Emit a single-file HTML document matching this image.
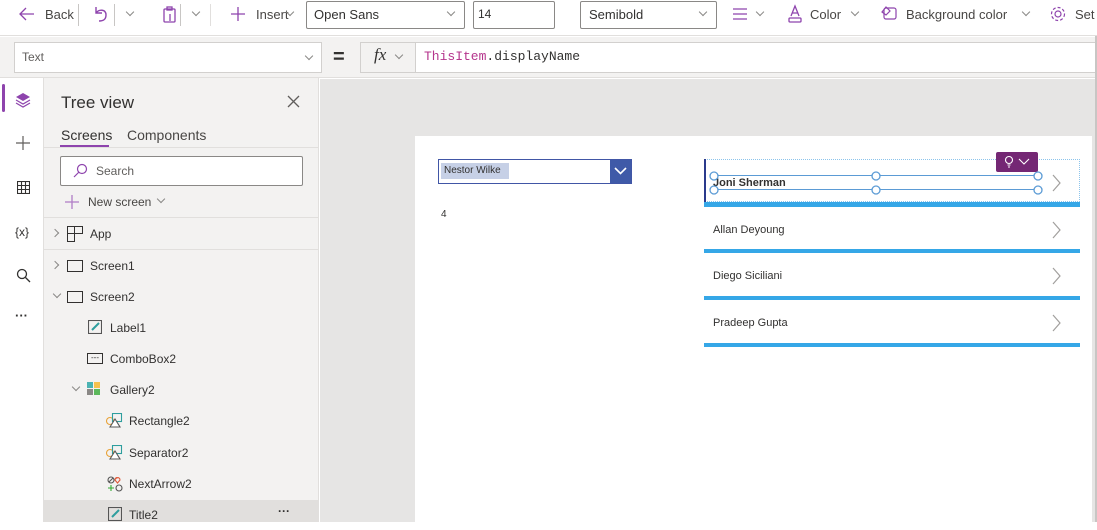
<!DOCTYPE html><html><head><style>
*{box-sizing:border-box;margin:0;padding:0}
body{width:1097px;height:522px;overflow:hidden;font-family:"Liberation Sans",sans-serif;background:#fff;position:relative;color:#323130}
.a{position:absolute}
.t{font-size:13px;color:#484644;white-space:nowrap}
.box{border:1px solid #8a8886;background:#fff;border-radius:2px}
.cv{position:absolute;width:6px;height:6px;border-right:1px solid #8a8886;border-bottom:1px solid #8a8886;transform:rotate(45deg)}
.cr{position:absolute;width:6px;height:6px;border-right:1px solid #8a8886;border-bottom:1px solid #8a8886;transform:rotate(-45deg)}
.tree .row{position:absolute;left:44px;width:275px;height:31px;font-size:12px;color:#323130}
.tree .row>span{position:absolute;top:9px}
</style></head><body>
<!-- toolbar -->
<div class="a" style="left:0;top:0;width:1097px;height:36px;background:#fff;border-bottom:1px solid #e1dfdd"></div>
<svg class="a" style="left:18px;top:6px" width="18" height="16" fill="none" stroke="#8e44ad" stroke-width="1.3"><path d="M16 8H2M8 2L2 8l6 6"/></svg>
<div class="a t" style="left:45px;top:7px">Back</div>
<div class="a" style="left:78px;top:4px;width:1px;height:22px;background:#c8c6c4"></div>
<svg class="a" style="left:93px;top:5px" width="16" height="18" fill="none" stroke="#8e44ad" stroke-width="1.4"><path d="M3 2v6h6M3 8c3-4 10-4 10 2s-5 6-7 6"/></svg>
<div class="a" style="left:114px;top:4px;width:1px;height:22px;background:#c8c6c4"></div>
<div class="cv" style="left:127px;top:9px"></div>
<svg class="a" style="left:162px;top:5px" width="16" height="18" fill="none" stroke="#8e44ad" stroke-width="1.3"><rect x="2" y="4" width="11" height="13" rx="1"/><rect x="5" y="2" width="5" height="3"/><path d="M8 9v7"/></svg>
<div class="a" style="left:180px;top:4px;width:1px;height:22px;background:#c8c6c4"></div>
<div class="cv" style="left:193px;top:9px"></div>
<div class="a" style="left:210px;top:4px;width:1px;height:22px;background:#e1dfdd"></div>
<svg class="a" style="left:230px;top:6px" width="16" height="16" stroke="#8e44ad" stroke-width="1.3"><path d="M8 1v14M1 8h14"/></svg>
<div class="a t" style="left:256px;top:7px">Insert</div>
<div class="cv" style="left:287px;top:9px"></div>
<div class="a box" style="left:306px;top:1px;width:159px;height:28px"></div>
<div class="a t" style="left:314px;top:7px;color:#323130">Open Sans</div>
<div class="cv" style="left:448px;top:9px"></div>
<div class="a box" style="left:473px;top:1px;width:82px;height:28px"></div>
<div class="a t" style="left:478px;top:7px;font-size:12px;color:#323130">14</div>
<div class="a box" style="left:580px;top:1px;width:137px;height:28px"></div>
<div class="a t" style="left:589px;top:7px;color:#323130">Semibold</div>
<div class="cv" style="left:700px;top:9px"></div>
<svg class="a" style="left:732px;top:7px" width="16" height="14" stroke="#8e44ad" stroke-width="1.3"><path d="M1 2h14M1 7h14M1 12h14"/></svg>
<div class="cv" style="left:757px;top:9px"></div>
<svg class="a" style="left:787px;top:4px" width="16" height="20" fill="none" stroke="#8e44ad" stroke-width="1.3"><path d="M4 12L8 2l4 10M5.5 9h5"/><rect x="2" y="14" width="12" height="4" rx="1"/></svg>
<div class="a t" style="left:810px;top:7px">Color</div>
<div class="cv" style="left:852px;top:9px"></div>
<svg class="a" style="left:880px;top:5px" width="18" height="16" fill="none" stroke="#8e44ad" stroke-width="1.2"><rect x="4" y="3" width="12" height="11" rx="2"/><path d="M2 7l4-5 4 4-4 4z"/></svg>
<div class="a t" style="left:906px;top:7px">Background color</div>
<div class="cv" style="left:1023px;top:9px"></div>
<svg class="a" style="left:1049px;top:5px" width="18" height="18" fill="none" stroke="#8e44ad" stroke-width="1.2"><circle cx="9" cy="9" r="3"/><circle cx="9" cy="9" r="6.5" stroke-dasharray="3 2"/></svg>
<div class="a t" style="left:1075px;top:7px">Set</div>
<!-- formula bar -->
<div class="a" style="left:0;top:37px;width:1097px;height:41px;background:#f3f2f1;border-bottom:1px solid #e1dfdd"></div>
<div class="a" style="left:14px;top:42px;width:308px;height:31px;background:#fff;border:1px solid #d2d0ce"></div>
<div class="a t" style="left:22px;top:50px;font-size:12px;color:#605e5c">Text</div>
<div class="cv" style="left:306px;top:53px"></div>
<div class="a t" style="left:333px;top:46px;font-size:20px;font-weight:bold;color:#323130">=</div>
<div class="a" style="left:360px;top:42px;width:737px;height:31px;background:#fff;border:1px solid #d2d0ce"></div>
<div class="a" style="left:361px;top:43px;width:55px;height:29px;background:#f3f2f1;border-right:1px solid #d2d0ce"></div>
<div class="a t" style="left:374px;top:45px;font-family:'Liberation Serif',serif;font-style:italic;font-size:17px;color:#323130">fx</div>
<div class="cv" style="left:396px;top:52px"></div>
<div class="a t" style="left:424px;top:49px;font-family:'Liberation Mono',monospace;font-size:13px;color:#323130"><span style="color:#b5358c">ThisItem</span>.displayName</div>
<!-- left rail -->
<div class="a" style="left:0;top:78px;width:44px;height:444px;background:#fff;border-right:1px solid #e1dfdd"></div>
<div class="a" style="left:2px;top:84px;width:3px;height:28px;background:#8e44ad;border-radius:2px"></div>
<svg class="a" style="left:15px;top:92px" width="16" height="16" fill="#8e44ad"><path d="M8 1l7 4-7 4-7-4z"/><path d="M1 8l7 4 7-4" fill="none" stroke="#8e44ad" stroke-width="1.2"/><path d="M1 11l7 4 7-4" fill="none" stroke="#8e44ad" stroke-width="1.2"/></svg>
<svg class="a" style="left:16px;top:136px" width="14" height="14" stroke="#605e5c" stroke-width="1.2"><path d="M7 0v14M0 7h14"/></svg>
<svg class="a" style="left:17px;top:181px" width="13" height="13" fill="none" stroke="#323130" stroke-width="1.1"><rect x="0.5" y="0.5" width="12" height="12"/><path d="M0 4.5h13M0 8.5h13M4.5 0v13M8.5 0v13"/></svg>
<div class="a t" style="left:15px;top:225px;font-size:12px;color:#323130">{x}</div>
<svg class="a" style="left:16px;top:268px" width="15" height="15" fill="none" stroke="#323130" stroke-width="1.3"><circle cx="6" cy="6" r="4.5"/><path d="M9.5 9.5L14 14"/></svg>
<div class="a t" style="left:15px;top:308px;font-size:13px;font-weight:bold;color:#323130">···</div>
<!-- tree panel -->
<div class="a" style="left:44px;top:78px;width:275px;height:444px;background:#f3f2f1;border-right:1px solid #e1dfdd"></div>
<div class="a t" style="left:61px;top:93px;font-size:17px;color:#323130">Tree view</div>
<svg class="a" style="left:287px;top:95px" width="13" height="13" stroke="#605e5c" stroke-width="1.3"><path d="M1 1l11 11M12 1L1 12"/></svg>
<div class="a t" style="left:61px;top:127px;font-size:14px;color:#323130">Screens</div>
<div class="a" style="left:60px;top:145px;width:49px;height:2px;background:#8e44ad"></div>
<div class="a t" style="left:127px;top:127px;font-size:14px">Components</div>
<div class="a" style="left:44px;top:147px;width:275px;height:1px;background:#e1dfdd"></div>
<div class="a" style="left:60px;top:156px;width:243px;height:30px;background:#fff;border:1px solid #8a8886;border-radius:2px"></div>
<svg class="a" style="left:72px;top:163px" width="16" height="16" fill="none" stroke="#8e44ad" stroke-width="1.2"><circle cx="10" cy="6" r="4.5"/><path d="M7 9l-5 5"/></svg>
<div class="a t" style="left:96px;top:164px;font-size:12px;color:#605e5c">Search</div>
<svg class="a" style="left:64px;top:194px" width="16" height="16" stroke="#b07cc6" stroke-width="1.3"><path d="M8 1v14M1 8h14"/></svg>
<div class="a t" style="left:88px;top:195px;font-size:12px">New screen</div>
<div class="cv" style="left:158px;top:196px"></div>
<div class="a" style="left:44px;top:217px;width:275px;height:1px;background:#e1dfdd"></div>
<div class="a" style="left:44px;top:249px;width:275px;height:1px;background:#e1dfdd"></div>
<div class="a" style="left:44px;top:500px;width:275px;height:22px;background:#e1dfdd"></div>
<div class="tree">
<div class="row" style="top:218px"><div class="cr" style="left:8px;top:12px"></div><svg style="position:absolute;left:23px;top:8px" width="16" height="16" fill="none" stroke="#323130"><path d="M0.5 0.5h15v7h-15zM0.5 7.5v8h7v-15"/></svg><span style="left:46px">App</span></div>
<div class="row" style="top:250px"><div class="cr" style="left:8px;top:12px"></div><span style="left:23px;top:10px;width:16px;height:12px;border:1px solid #323130"></span><span style="left:46px">Screen1</span></div>
<div class="row" style="top:281px"><div class="cv" style="left:10px;top:10px"></div><span style="left:23px;top:10px;width:16px;height:12px;border:1px solid #323130"></span><span style="left:46px">Screen2</span></div>
<div class="row" style="top:312px"><svg style="position:absolute;left:44px;top:8px" width="14" height="14" fill="none" stroke="#555" stroke-width="1.1"><rect x="0.5" y="0.5" width="13" height="13"/><path d="M4 10l7-7" stroke="#2e9e9e" stroke-width="2"/></svg><span style="left:66px">Label1</span></div>
<div class="row" style="top:343px"><span style="left:43px;top:10px;width:16px;height:11px;border:1px solid #323130;font-size:8px;line-height:7px;text-align:center">---</span><span style="left:66px">ComboBox2</span></div>
<div class="row" style="top:374px"><div class="cv" style="left:29px;top:10px"></div><span style="left:43px;top:8px;width:6px;height:6px;background:#4bb3b3"></span><span style="left:50px;top:8px;width:6px;height:6px;background:#f6c14f"></span><span style="left:43px;top:15px;width:6px;height:6px;background:#8a8886"></span><span style="left:50px;top:15px;width:6px;height:6px;background:#5cb85c"></span><span style="left:66px">Gallery2</span></div>
<div class="row" style="top:405px"><svg style="position:absolute;left:62px;top:8px" width="17" height="15" fill="none" stroke-width="1.1"><circle cx="4" cy="8" r="3.5" stroke="#e8a33a"/><rect x="6.5" y="0.5" width="9" height="8" stroke="#2e9e9e"/><path d="M4 14l5-8 5 8z" stroke="#555" fill="#fff"/></svg><span style="left:85px">Rectangle2</span></div>
<div class="row" style="top:437px"><svg style="position:absolute;left:62px;top:8px" width="17" height="15" fill="none" stroke-width="1.1"><circle cx="4" cy="8" r="3.5" stroke="#e8a33a"/><rect x="6.5" y="0.5" width="9" height="8" stroke="#2e9e9e"/><path d="M4 14l5-8 5 8z" stroke="#555" fill="#fff"/></svg><span style="left:85px">Separator2</span></div>
<div class="row" style="top:468px"><svg style="position:absolute;left:63px;top:8px" width="16" height="16" fill="none" stroke-width="1.1"><circle cx="4" cy="4" r="3" stroke="#555"/><path d="M2 6l4-4" stroke="#555"/><path d="M10 2c1-1 3 0 3 2l-2.5 3L8 4c0-2 2-3 2-2z" stroke="#e05a3a"/><path d="M4 9v6M1 12h6" stroke="#3a3"/><circle cx="12" cy="12" r="3" stroke="#555"/></svg><span style="left:85px">NextArrow2</span></div>
<div class="row" style="top:499px"><svg style="position:absolute;left:64px;top:8px" width="14" height="14" fill="none" stroke="#555" stroke-width="1.1"><rect x="0.5" y="0.5" width="13" height="13"/><path d="M4 10l7-7" stroke="#2e9e9e" stroke-width="2"/></svg><span style="left:85px">Title2</span><span style="left:234px;top:5px;font-weight:bold">···</span></div>
</div>
<!-- canvas -->
<div class="a" style="left:320px;top:79px;width:777px;height:443px;background:#e6e5e4"></div>
<div class="a" style="left:415px;top:136px;width:677px;height:386px;background:#fff"></div>
<div class="a" style="left:1095px;top:36px;width:2px;height:486px;background:#c8c6c4"></div>
<div class="a" style="left:438px;top:159px;width:194px;height:25px;border:1px solid #4156a6;background:#fff"></div>
<div class="a" style="left:441px;top:163px;width:68px;height:16px;background:#c6d0e6"></div>
<div class="a t" style="left:444px;top:165px;font-size:10px;color:#323130">Nestor Wilke</div>
<div class="a" style="left:610px;top:160px;width:21px;height:23px;background:#3f5aa8"></div>
<svg class="a" style="left:614px;top:166px" width="13" height="10" fill="none" stroke="#fff" stroke-width="1.6"><path d="M1 2l5.5 5.5L12 2"/></svg>
<div class="a t" style="left:441px;top:209px;font-size:10px;color:#323130">4</div>
<!-- gallery -->
<div class="a" style="left:704px;top:159px;width:376px;height:43px;border:1px dotted #8cc4ec"></div>
<div class="a" style="left:704px;top:159px;width:2px;height:43px;background:#2b3a8c"></div>
<div class="a" style="left:713px;top:175px;width:326px;height:15px;border-top:1.5px solid #5b9bd5;border-bottom:1.5px solid #5b9bd5"></div>
<div class="a t" style="left:713px;top:177px;font-size:11px;font-weight:bold;color:#323130">Joni Sherman</div>
<div class="a" style="left:996px;top:152px;width:42px;height:20px;background:#742774;border-radius:2px"></div>
<svg class="a" style="left:1004px;top:155px" width="28" height="14" fill="none" stroke="#fff" stroke-width="1.1"><circle cx="5" cy="5" r="3.5"/><path d="M3.5 10h3M4 12h2M15 4l5 5 5-5"/></svg>
<div class="a" style="left:704px;top:202px;width:376px;height:5px;background:#35a7e7"></div>
<div class="a t" style="left:713px;top:224px;font-size:11px;color:#323130">Allan Deyoung</div>
<div class="a" style="left:704px;top:249px;width:376px;height:4px;background:#35a7e7"></div>
<div class="a t" style="left:713px;top:270px;font-size:11px;color:#323130">Diego Siciliani</div>
<div class="a" style="left:704px;top:296px;width:376px;height:4px;background:#35a7e7"></div>
<div class="a t" style="left:713px;top:317px;font-size:11px;color:#323130">Pradeep Gupta</div>
<div class="a" style="left:704px;top:343px;width:376px;height:4px;background:#35a7e7"></div>
<svg class="a" style="left:1050px;top:170px" width="14" height="170" fill="none" stroke="#a19f9d" stroke-width="1.2">
<path d="M3 5l7 8-7 8M3 52l7 8-7 8M3 98l7 8-7 8M3 145l7 8-7 8"/></svg>
<svg class="a" style="left:706px;top:168px" width="340" height="30" fill="#fff" stroke="#5b9bd5" stroke-width="1.3">
<circle cx="8" cy="8" r="4"/><circle cx="170" cy="8" r="4"/><circle cx="332" cy="8" r="4"/>
<circle cx="8" cy="22" r="4"/><circle cx="170" cy="22" r="4"/><circle cx="332" cy="22" r="4"/></svg>
</body></html>
